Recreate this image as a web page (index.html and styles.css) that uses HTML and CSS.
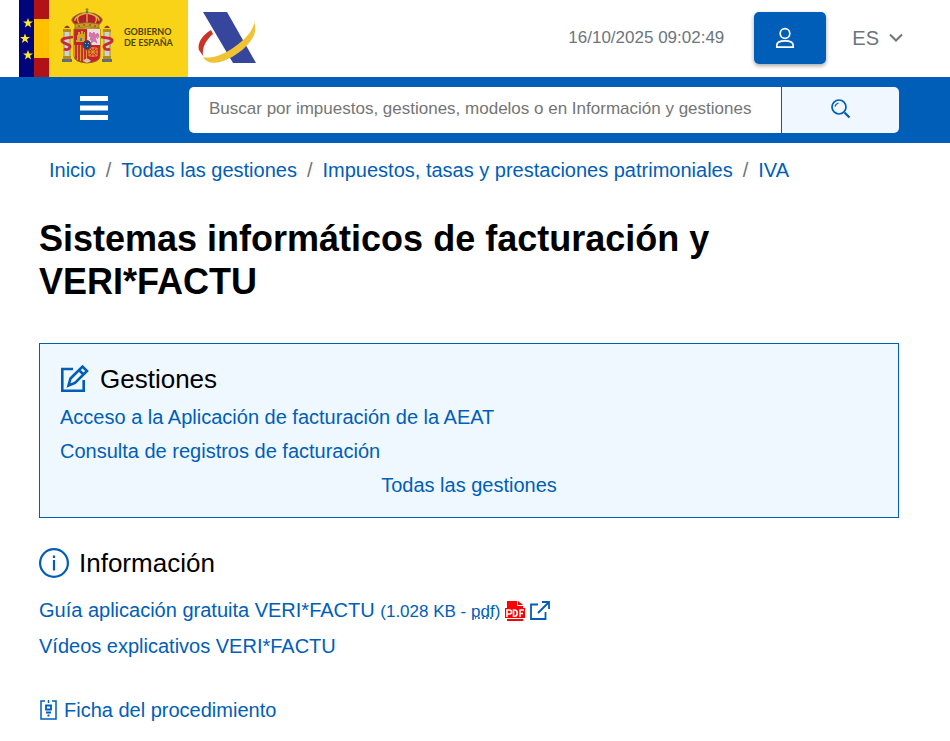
FILE: index.html
```html
<!DOCTYPE html>
<html lang="es">
<head>
<meta charset="utf-8">
<meta name="viewport" content="width=device-width, initial-scale=1">
<title>Sistemas informáticos de facturación y VERI*FACTU</title>
<link rel="stylesheet" href="styles.css">
</head>
<body>
<header class="top">
  <a class="brand" href="#" aria-label="Gobierno de España">
    <svg width="169" height="77" viewBox="0 0 169 77">
      <rect width="169" height="77" fill="#f8d318"/>
      <rect width="15" height="77" fill="#00057a"/>
      <rect x="15" width="15" height="77" fill="#b01218"/>
      <rect x="15" y="19" width="15" height="39" fill="#ffc000"/>
      <g fill="#ffe928">
        <path id="star" d="M9 18l1.300 3.500h3.700l-3 2.300 1.100 3.600-3.100-2.200-3.100 2.200 1.100-3.600-3-2.300h3.700z"/>
        <use href="#star" x="-3" y="15.500"/>
        <use href="#star" y="32"/>
      </g>
      <!-- Pillars and their ribbons -->
      <g>
        <path d="M45 31h6v27h-6zM85 31h6v27h-6z" fill="#d5d2c5" stroke="#76766b" stroke-width=".7"/>
        <path d="M44 29h8v3h-8zM84 29h8v3h-8zM44 56h8v3h-8zM84 56h8v3h-8z" fill="#b48a19"/>
        <path d="M43 59h10v3H43zM83 59h10v3H83z" fill="#5b7183"/>
        <path d="M45 28q3-5 6 0zM85 28q3-5 6 0z" fill="#9b3a23"/>
        <path d="M54 37c-5 1-12 1-11 4s9 3 8 6-4 3-6 2M82 37c5 1 12 1 11 4s-9 3-8 6 4 3 6 2" fill="none" stroke="#c62b37" stroke-width="2.800"/>
      </g>
      <!-- Quartered shield -->
      <path d="M55 29h26v27q0 6-13 7-13-1-13-7z" fill="#c91f32" stroke="#89651b"/>
      <path d="M68 29h13v16H68z" fill="#eadfe2"/>
      <path d="M55 45h13v17q-13-1-13-6z" fill="#d99b22"/>
      <path d="M57 45v14M60 45v16M63 45v17M66 45v17" stroke="#bd1c2b" stroke-width="1.600"/>
      <path d="M58 41v-6h1v-3h2v2h1v-3h2v3h1v-2h1v9zM57 40h9v2h-9z" fill="#d4a51e"/>
      <path d="M61 38h2v3h-2z" fill="#5278a2"/>
      <path d="M71 32l2 2 2-2 1 3 3-2-1 4-2 1 2 5-3-2-3 2 1-4-2 1 1-3-2-1zM78 39q3-2 1-5" fill="#d775ad" stroke="#bd5897" stroke-width=".6"/>
      <path d="M70 48h8v8h-8zM70 48l8 8M78 48l-8 8M74 47v10M69 52h10" fill="none" stroke="#df9c24"/>
      <path d="M64 61q4-5 8 0l-4 2z" fill="#d9c3ad"/>
      <ellipse cx="68" cy="45" rx="4" ry="4.500" fill="#174982" stroke="#a22537"/>
      <path d="M66 43h1v1h-1zM69 43h1v1h-1zM68 46h1v1h-1z" fill="#b7ac55"/>
      <!-- Crown -->
      <path d="M57 25q-8-5-1-9 5-4 12-3 7-1 12 3 7 4-1 9z" fill="#b52029" stroke="#9b7418"/>
      <path d="M61 25q-5-7 0-10M68 25V13M75 25q5-7 0-10M56 21q-1-5 12-8 13 3 12 8" fill="none" stroke="#dbb344" stroke-width="1.300"/>
      <path d="M56 24q12-3 24 0v4q-12-2-24 0z" fill="#c69a28" stroke="#866019" stroke-width=".7"/>
      <path d="M59 26h2M64 25h2M70 25h2M75 26h2" stroke="#a2263a"/>
      <circle cx="68" cy="12" r="1.500" fill="#557386"/>
      <path d="M68 8v4M66.500 9.500h3" stroke="#987419"/>
      <text class="brand-text" x="105" y="35">GOBIERNO</text>
      <text class="brand-text" x="105" y="46">DE ESPAÑA</text>
    </svg>
  </a>
  <a class="agency" href="#" aria-label="Agencia Tributaria">
    <svg width="58" height="53" viewBox="0 0 58 53">
      <path d="M5 1h24l29 51H35z" fill="#35469c"/>
      <path d="M13 19C4 24-1 33 1 39l4 6c-1-9 3-16 10-22z" fill="#c83528"/>
      <path d="M56 7C58 13 53 25 35 37 23 45 12 48 5 46 8 51 14 53 22 51 40 46 60 28 57 15z" fill="#efc334"/>
    </svg>
  </a>
  <time class="clock" datetime="2025-10-16T09:02:49">16/10/2025 09:02:49</time>
  <button class="user" type="button" aria-label="Acceder">
    <svg width="20" height="22" viewBox="0 0 20 22" fill="none" stroke="#fff" stroke-width="1.700">
      <circle cx="10" cy="6.500" r="4.800"/>
      <path d="M1.800 20.200v-2c0-3 3-4.400 8.200-4.400s8.200 1.400 8.200 4.400v2z"/>
    </svg>
  </button>
  <button class="language" type="button" aria-label="Idioma: ES">ES
    <svg width="14" height="9" viewBox="0 0 14 9" fill="none" stroke="#6c757d" stroke-width="2"><path d="M1 1.500l6 6 6-6"/></svg>
  </button>
</header>
<nav class="bar" aria-label="Principal">
  <button class="menu" type="button" aria-label="Menú">
    <svg width="28" height="24" viewBox="0 0 28 24" fill="#fff"><path d="M0 0h28v5H0zM0 9.500h28v5H0zM0 19h28v5H0z"/></svg>
  </button>
  <form class="search" role="search">
    <input type="text" aria-label="Buscar" placeholder="Buscar por impuestos, gestiones, modelos o en Información y gestiones">
    <button type="button" aria-label="Buscar">
      <svg width="20" height="20" viewBox="0 0 20 20" fill="none" stroke="#005eb8">
        <circle cx="8" cy="8" r="7" stroke-width="1.700"/>
        <path d="M4 7.500q.5-2.500 3.500-3.500" stroke-width="1.300"/>
        <path d="M13.500 13.500l5 5" stroke-width="2.200"/>
      </svg>
    </button>
  </form>
</nav>
<nav class="crumbs" aria-label="Ruta">
  <ol>
    <li><a href="#">Inicio</a></li>
    <li><a href="#">Todas las gestiones</a></li>
    <li><a href="#">Impuestos, tasas y prestaciones patrimoniales</a></li>
    <li><a href="#">IVA</a></li>
  </ol>
</nav>
<main>
  <h1>Sistemas informáticos de facturación y VERI*FACTU</h1>
  <section class="panel">
    <h2>
      <svg width="30" height="30" viewBox="0 0 30 30" fill="none" stroke="#005eb8" stroke-width="2.600">
        <path d="M13 5H2.300v21.700h21.400V16"/>
        <path d="M8.500 21.500l2-7L22.500 2.500l4.500 4.500-12 12zM19 6l4.500 4.500"/>
      </svg>
      Gestiones
    </h2>
    <ul>
      <li><a href="#">Acceso a la Aplicación de facturación de la AEAT</a></li>
      <li><a href="#">Consulta de registros de facturación</a></li>
    </ul>
    <p class="all"><a href="#">Todas las gestiones</a></p>
  </section>
  <section class="info">
    <h2>
      <svg width="30" height="30" viewBox="0 0 30 30" fill="none" stroke="#005eb8" stroke-width="2.200">
        <circle cx="15" cy="15" r="13.900"/>
        <path d="M15 12v10.500M15 7.500v2.500"/>
      </svg>
      Información
    </h2>
    <ul>
      <li><a class="file" href="#"><span>Guía aplicación gratuita VERI*FACTU <small>(1.028 KB - <abbr title="Portable Document Format">pdf</abbr>)</small></span>
        <svg width="20" height="20" viewBox="0 0 20 20">
          <path d="M2 0h10v5h6v3H2zM13 0l5 4h-5zM0 7h20v10H0zM2 18h16v2H2z" fill="#f00"/>
          <path d="M2 16V9h2.500a2 2 0 0 1 0 4H2M8.500 9v6.200h1.200q2.500 0 2.500-3.100T9.700 9zM15 16V9h4M15 12.500h3" fill="none" stroke="#fff" stroke-width="1.600"/>
        </svg>
        <svg width="20" height="20" viewBox="0 0 20 20" fill="none" stroke="#005eb8" stroke-width="1.800"><path d="M8 3.500H1V18h14.500v-7M12 1h7v7M19 1L8 12"/></svg>
      </a></li>
      <li><a href="#">Vídeos explicativos VERI*FACTU</a></li>
    </ul>
  </section>
  <a class="sheet" href="#">
    <svg width="20" height="20" viewBox="0 0 20 20" fill="none" stroke="#005eb8" stroke-width="1.500">
      <path d="M6 1H2v18h15V1h-4M9.500 0v3"/>
      <path d="M7 5.500h5v4H7zM7 12.500h5M8.500 15.500h2" stroke-width="1.800"/>
    </svg>
    Ficha del procedimiento
  </a>
</main>
</body>
</html>
```

FILE: styles.css
```css
* { box-sizing: border-box; }

body {
  margin: 0;
  background: #fff;
  color: #000;
  font: 20px/34px "Liberation Sans", Arial, sans-serif;
}

a { color: #005eb8; text-decoration: none; }
a:hover { text-decoration: underline; }
button { border: 0; font: inherit; cursor: pointer; }
svg { display: block; flex: none; }
ul, ol { margin: 0; padding: 0; list-style: none; }

.top {
  display: flex;
  align-items: center;
  height: 77px;
  padding: 0 45px 2px 19px;
}

.brand { align-self: flex-start; }
.brand-text { font: 700 9px/10px "Lato", sans-serif; fill: #4d430d; }
.agency { margin-left: 10px; }

.clock {
  margin-left: auto;
  color: #6c757d;
  font-size: 17px;
}

.user {
  display: flex;
  align-items: center;
  width: 72px;
  height: 52px;
  margin: 0 24px 0 30px;
  padding: 0 21px;
  border-radius: 5px;
  background: #005eb8;
  box-shadow: 0 2px 4px rgba(0, 0, 0, .35);
}

.language {
  display: flex;
  align-items: center;
  gap: 10px;
  padding: 0 2px;
  background: none;
  color: #6c757d;
}

.bar {
  display: flex;
  align-items: center;
  gap: 79px;
  padding: 10px 51px 10px 78px;
  background: #005eb8;
}

.menu { padding: 0 2px 4px; background: none; }
.search { display: flex; flex: 1; height: 46px; }

.search input {
  flex: 1;
  min-width: 0;
  padding: 0 20px 2px;
  border: 0;
  border-radius: 5px 0 0 5px;
  background: #fff;
  font: 17px "Liberation Sans", Arial, sans-serif;
}

.search input::placeholder { color: #757575; opacity: 1; }

.search button {
  display: flex;
  align-items: center;
  justify-content: center;
  width: 118px;
  padding: 0 0 2px;
  border-left: 1px solid #005eb8;
  border-radius: 0 5px 5px 0;
  background: #f0f7ff;
}

.crumbs { padding: 10px 49px; }
.crumbs ol { display: flex; flex-wrap: wrap; }
.crumbs li + li::before { content: "/"; padding: 0 10px; color: #6c757d; }

main { padding: 20px 51px 20px 39px; }

h1 { margin: 0 0 40px; font-size: 36px; line-height: 43px; }

h2 {
  display: flex;
  align-items: center;
  gap: 10px;
  margin: 0;
  font-size: 26px;
  font-weight: 400;
  line-height: 30px;
}

.panel {
  padding: 20px 20px 15px;
  border: 1px solid #005eb8;
  background: #f0f8ff;
}

.panel ul { padding-top: 6px; }
.all { margin: 0; text-align: center; }

.info { padding: 30px 0; }
.info ul { padding-top: 15px; }
.info li { line-height: 34px; }
.file { display: flex; align-items: center; gap: 5px; }
small { font-size: 17px; }

.sheet { display: flex; align-items: center; gap: 5px; }
```
